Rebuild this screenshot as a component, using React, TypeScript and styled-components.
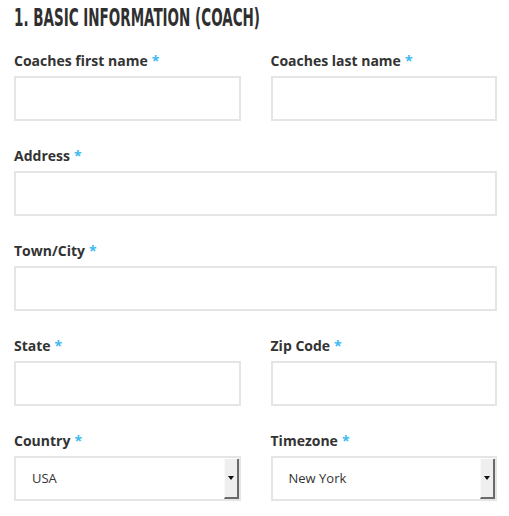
import styled, { createGlobalStyle } from 'styled-components'

const GlobalStyle = createGlobalStyle`
    html, body {
        margin: 0;
        padding: 0;
        background: #fff;
    }
    * {
        box-sizing: border-box;
    }
`

const FormWrapper = styled.form`
    padding: 4px 12px 0 14px;
    font-family: "Open Sans", "Liberation Sans", sans-serif;
    color: #333;
`

const Heading = styled.h2`
    margin: 0 0 19px;
    font-family: "DejaVu Sans Condensed", "Liberation Sans Narrow", sans-serif;
    font-stretch: condensed;
    font-weight: bold;
    font-size: 24px;
    line-height: 28px;
    color: #2f2f2f;
    text-transform: uppercase;
    white-space: nowrap;
`

const HeadingText = styled.span`
    display: inline-block;
    transform: scaleX(0.625);
    transform-origin: left center;
`

const Row = styled.div<{ $cols: number }>`
    display: grid;
    grid-template-columns: ${p => (p.$cols === 2 ? '1fr 1fr' : '1fr')};
    column-gap: 30px;
    margin-bottom: 25px;
`

const Field = styled.div`
    display: flex;
    flex-direction: column;
`

const Label = styled.label`
    font-weight: bold;
    font-size: 14px;
    line-height: 20px;
    margin-bottom: 5px;
    color: #333;
`

const Required = styled.span`
    color: #3db9f0;
    margin-left: 4px;
`

const TextInput = styled.input`
    height: 45px;
    width: 100%;
    border: 2px solid #e5e5e5;
    background: #fff;
    padding: 0 16px;
    font: inherit;
    outline: none;
`

const SelectBox = styled.div`
    display: flex;
    height: 45px;
    border: 2px solid #e5e5e5;
    background: #fff;
`

const Select = styled.select`
    flex: 1;
    appearance: none;
    border: none;
    background: transparent;
    padding: 0 0 2px 16px;
    font-family: "Open Sans", "Liberation Sans", sans-serif;
    font-size: 13px;
    color: #333;
    outline: none;
`

const SelectArrow = styled.span`
    width: 15px;
    margin: 1px 0 0;
    background: #efefef;
    border-right: 2px solid #6a6a6a;
    border-bottom: 2px solid #6a6a6a;
    border-left: 1px solid #fafafa;
    display: flex;
    align-items: center;
    justify-content: center;

    &::after {
        content: '';
        border-left: 3px solid transparent;
        border-right: 3px solid transparent;
        border-top: 4px solid #111;
    }
`

function LabelText({ children }: { children: string }) {
    return (
        <Label>
            {children}
            <Required>*</Required>
        </Label>
    )
}

export default function App() {
    return (
        <>
            <GlobalStyle />
            <FormWrapper>
                <Heading>
                    <HeadingText>1. Basic Information (Coach)</HeadingText>
                </Heading>
                <Row $cols={2}>
                    <Field>
                        <LabelText>Coaches first name</LabelText>
                        <TextInput type="text" />
                    </Field>
                    <Field>
                        <LabelText>Coaches last name</LabelText>
                        <TextInput type="text" />
                    </Field>
                </Row>
                <Row $cols={1}>
                    <Field>
                        <LabelText>Address</LabelText>
                        <TextInput type="text" />
                    </Field>
                </Row>
                <Row $cols={1}>
                    <Field>
                        <LabelText>Town/City</LabelText>
                        <TextInput type="text" />
                    </Field>
                </Row>
                <Row $cols={2}>
                    <Field>
                        <LabelText>State</LabelText>
                        <TextInput type="text" />
                    </Field>
                    <Field>
                        <LabelText>Zip Code</LabelText>
                        <TextInput type="text" />
                    </Field>
                </Row>
                <Row $cols={2}>
                    <Field>
                        <LabelText>Country</LabelText>
                        <SelectBox>
                            <Select defaultValue="USA">
                                <option>USA</option>
                            </Select>
                            <SelectArrow />
                        </SelectBox>
                    </Field>
                    <Field>
                        <LabelText>Timezone</LabelText>
                        <SelectBox>
                            <Select defaultValue="New York">
                                <option>New York</option>
                            </Select>
                            <SelectArrow />
                        </SelectBox>
                    </Field>
                </Row>
            </FormWrapper>
        </>
    )
}
